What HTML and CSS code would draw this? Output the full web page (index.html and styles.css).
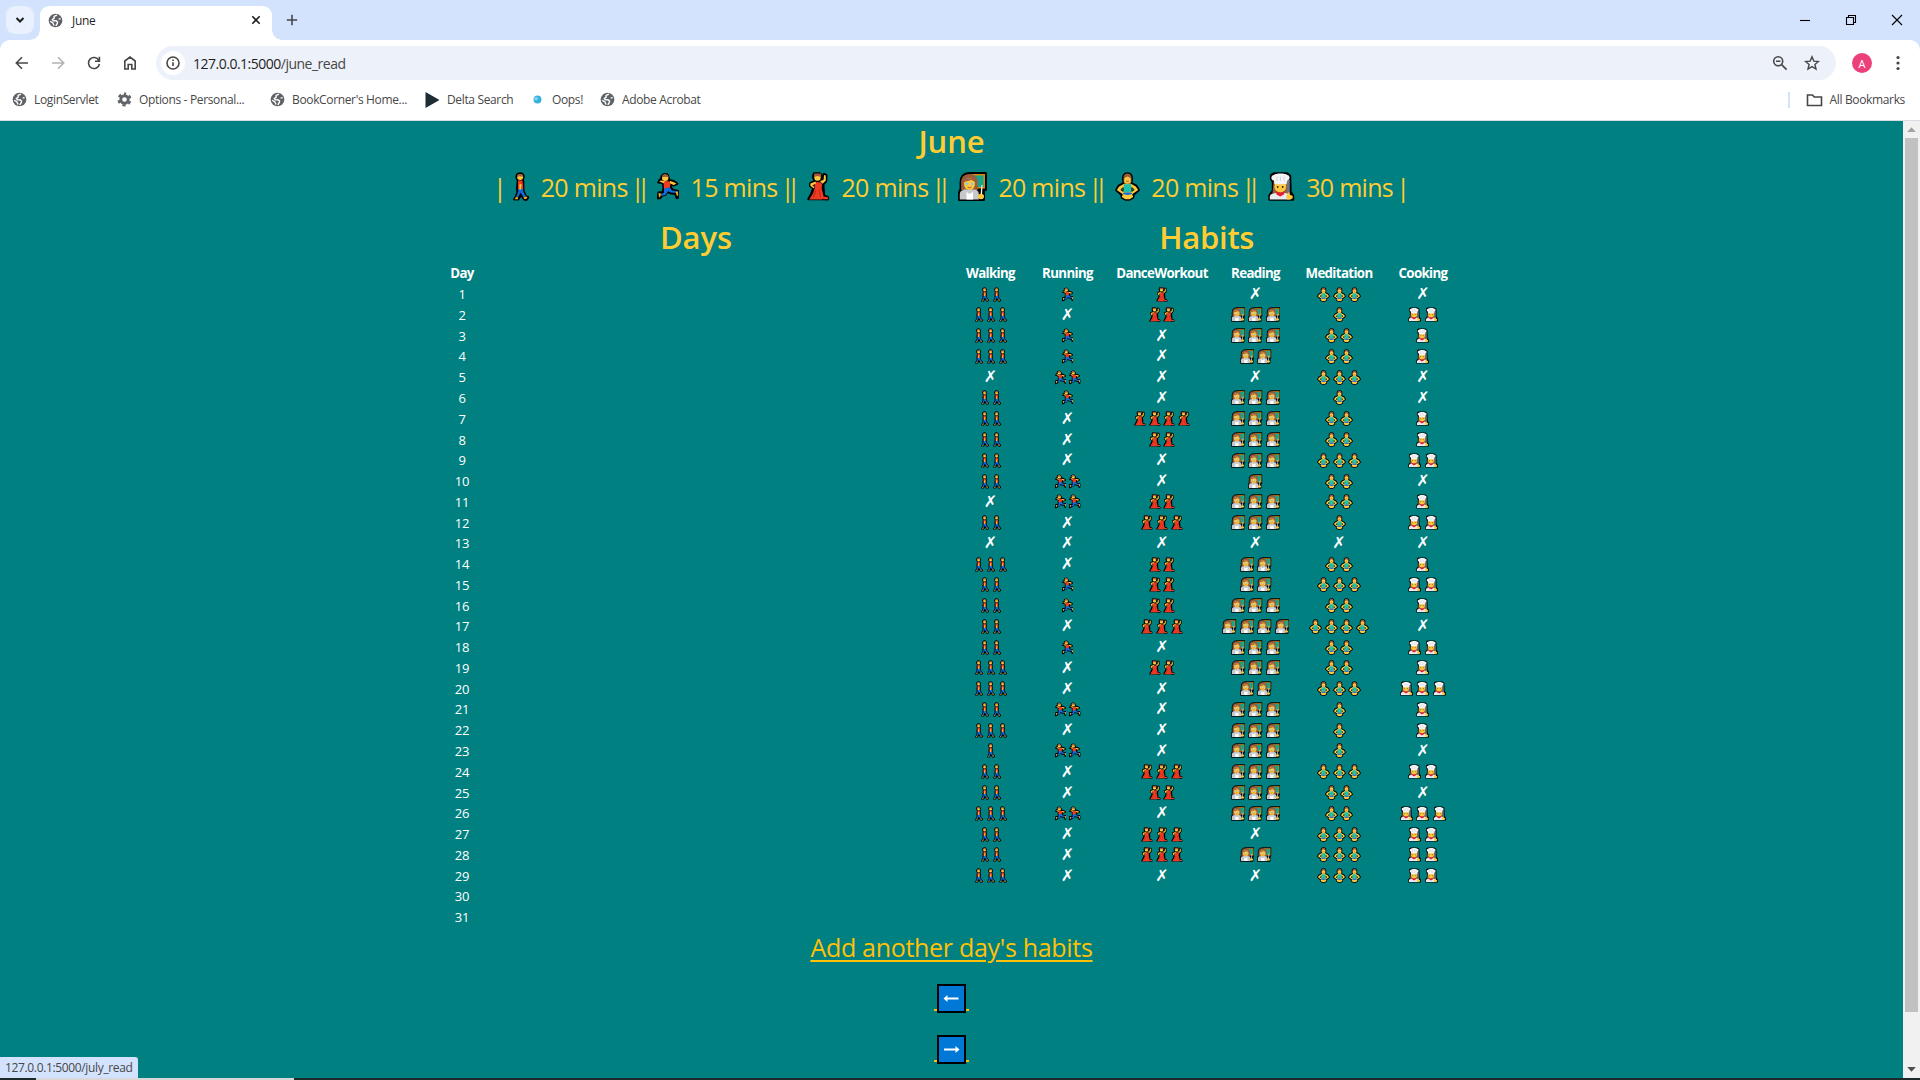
FILE: index.html
```html
<!DOCTYPE html>
<html lang="en">
<head>
<meta charset="utf-8">
<title>June</title>
<link rel="stylesheet" href="styles.css">
</head>
<body>
<svg class="sprite" aria-hidden="true">
  <symbol id="walk" viewBox="0 0 16 29">
    <path d="M7 1.500c-2.600 0-3.600 2-3.200 4.200L5 8.600 4.200 17l.6 3-2 5.500-1.300 1.800h3.600l3-5 3.200 5 2 .3 1.800-2.300-2.300-.6-2.600-5.700L10 9.500 9.500 8.200l1-3.500C10.200 2.500 9 1.500 7 1.500Z" fill="#111" stroke="#000" stroke-width="2.600" stroke-linejoin="round"/>
    <path d="M5 16h5l.2 3.500 2.600 5-2.100 1-3.200-5-2.500 5H3l2.300-6Z" fill="#0f6ddb"/>
    <path d="m3 25 2.200.5-.4 1.700H1.600ZM10.600 25.300l2-.9 2 .6-1.500 2-2 .1Z" fill="#f5a623"/>
    <path d="M5 8.500h4.500L10.300 17H5Z" fill="#ef3b22"/>
    <path d="M6.500 12h2l-.5 5.500H6.300Z" fill="#ffc83d"/>
    <circle cx="7.100" cy="5" r="3" fill="#ffc83d"/>
    <path d="M4 5.300C3.600 1 10.300.7 10.400 4.700L6 4.200Z" fill="#a4593b"/>
  </symbol>
  <symbol id="run" viewBox="0 0 22 28">
    <path d="M8.500 1.500c-3 0-4.500 2-4 4.800l-2 1.200-1 2.500 4.500.5.6 5-.8 4-4.300.500-.5 6 2.500-.5 1.500-2.500 3.500-.8 2-3 3 1.500 5 .8 1.200 4 1.600-.5V18.500l-5.300-1-2.500-3 .500-3 2.500 1.500 3.800-1.800-3.500-2.700-4.500-1-1-3c-.2-1.800-1.500-3-2.800-3Z" fill="#111" stroke="#000" stroke-width="2.200" stroke-linejoin="round"/>
    <path d="m7 15 5.500-.5 2.500 3.500 5 .8-.3 1.700-5.700-.5-3-1.300-2.500 3.800-4.300.7-.5-1.700 3.300-1Z" fill="#0f6ddb"/>
    <path d="m1.500 20.500 2 .2.500 2.200-2 2.300ZM18.700 19.500l2.300-.7.200 4.700-1.500-.5Z" fill="#f5a623"/>
    <path d="M6.500 8.500 14 9l-1.200 6L7 16Z" fill="#ef3b22"/>
    <path d="M2 8.800 4.500 8 8 9 6.500 10.800ZM13 8.500l4 1.200 2.500 1.500-3 1.200-3.500-1.700Z" fill="#ffc83d"/>
    <circle cx="8.200" cy="5.200" r="3.200" fill="#ffc83d"/>
    <path d="M5 4.700C4.700.8 11.500.8 11.500 5L9 4.200Z" fill="#a4593b"/>
  </symbol>
  <symbol id="dance" viewBox="0 0 23 29">
    <path d="M7 1.500 6 5 8 9 3.500 11l-.3 3 3.300 2-2 5.500-3 5.500h13.500l6 .2-.3-2-3.700-1.500-.8-11.200 3-3.500V3L17 2l-1.300 5-2.700.5 1.500-4L13 1.500Z" fill="#111" stroke="#000" stroke-width="2.400" stroke-linejoin="round"/>
    <path d="m7.500 10 6.500.5 1.200 2.500-.7 3 2.500 10-2 1.500H2.200L6 21.500l1.800-5.500Z" fill="#ef3b22"/>
    <path d="m9 18-3 8M12 17.500l1.500 8" stroke="#c5221b" fill="none"/>
    <path d="m16.500 24.500 4.500.7.200 2h-5Z" fill="#ef3b22"/>
    <path d="m3.500 11.500 5-2 .5 2-3.500 1.800 2 2-1 1-3.200-2.500ZM13 9l3.500-1 .6-5 1.700.6v5.200l-3.300 3Z" fill="#ffc83d"/>
    <circle cx="10.500" cy="5.600" r="3.200" fill="#ffc83d"/>
    <path d="m7 5 .2-3.500H14l.2 3.500-3.700-1Z" fill="#a4593b"/>
  </symbol>
  <symbol id="read" viewBox="0 0 29 29">
    <path d="M12 1h16v17h-2v10H1v-8l1.500-3V10C2.500 5 5 1 12 1Z" fill="#000" stroke="#000" stroke-width="1.800" stroke-linejoin="round"/>
    <path d="M13 2h14v14.500H15Z" fill="#d48a13"/>
    <path d="M15 3.500h10.500V15H15Z" fill="#16a58c"/>
    <path d="M11.500 2C5.500 2 3.200 6 3.200 10v8h16.500v-8c0-5-3.500-8-8.200-8Z" fill="#9a5b3c"/>
    <path d="M1.800 27.500V22c0-3 3-4.500 6-4.500h8c3 0 5 1.500 5 4.500v5.500Z" fill="#c6c8cc"/>
    <path d="m8.500 20 3 2 3.500-2v7.500H8.500Z" fill="#fff"/>
    <ellipse cx="11.500" cy="12" rx="5.500" ry="6" fill="#ffc83d"/>
    <path d="M5.500 10c2-5 10-5 12 0l-4-2Z" fill="#9a5b3c"/>
    <circle cx="9" cy="11.800" r="1.400" fill="#83c7e8"/><circle cx="14.200" cy="11.800" r="1.400" fill="#83c7e8"/>
    <path d="M9.500 15q2 1.500 4 0" stroke="#a4593b" fill="none"/>
    <path d="m23.500 13 1 0-.5 10h-1.500Z" fill="#fff"/>
    <ellipse cx="23" cy="24.500" rx="3" ry="2.700" fill="#ffc83d"/>
  </symbol>
  <symbol id="yoga" viewBox="0 0 25 29">
    <path d="M12.500 1.500C9.300 1.500 7.800 4 8.300 8l.5 3-5 2.800-2.500 4.200L6.500 22.500l.5 3 3.500 2h4l3.500-2 .5-3 5.200-4.500-2.500-4.200-5-2.800.5-3c.5-4-1-6.500-4.200-6.500Z" fill="#111" stroke="#000" stroke-width="2.400" stroke-linejoin="round"/>
    <path d="M9.500 11.500 4.200 14.600 1.800 18l6 4.300L6.800 25l3.500 2.200h4.400l3.500-2.200-1-2.700 6-4.300-2.400-3.400-5.300-3.100Z" fill="#ffc83d"/>
    <path d="m8.300 15.500-2.500 2.200 2.500 1.800ZM16.700 15.500l2.500 2.200-2.500 1.800Z" fill="#067c79" stroke="#000" stroke-width=".8"/>
    <path d="M8.800 12.200h7.400v8H8.800Z" fill="#19c2ad"/>
    <path d="M9 20.500h7l1.500 1.500-5 1-5-1Z" fill="#0f6ddb"/>
    <path d="M8.500 10V5.500c0-5.300 8-5.300 8 0V10l-1.500 1.500h-5Z" fill="#9a5b3c"/>
    <path d="M9.300 6.200 12.500 4.500l3.200 1.700v3.300c0 3-6.400 3-6.400 0Z" fill="#ffc83d"/>
    <path d="M11 9.300h3" stroke="#a4593b" stroke-width=".9"/>
  </symbol>
  <symbol id="cook" viewBox="0 0 27 29">
    <path d="M6 1.500h13l3 2.500.5 16 2.500 3.500v4H1.500V23.500L5 18.500V10L3 6.500 3.300 3Z" fill="#111" stroke="#000" stroke-width="2.400" stroke-linejoin="round"/>
    <path d="M5.500 10h14.500v11.500H4.500Z" fill="#9a5b3c"/>
    <path d="M19 8h2.800v13H19Z" fill="#6f7882"/>
    <path d="M1.800 27.500V24.500c0-2 3-3.500 6-3.500h9c3 0 5 1.500 5 3.500v3Z" fill="#e8eaee"/>
    <ellipse cx="12.300" cy="14.700" rx="5.900" ry="5.700" fill="#ffc83d"/>
    <path d="M6.500 12.200 5.800 8.500C2.500 8 2.500 3.500 6 3c1-2 12-2 13.200 0 3.300.5 3 5 0 5.500l-.7 3.700Z" fill="#f3f4f6"/>
    <path d="M9 4.500v4.500M12.500 4.500v4.500M16 4.500v4.500" stroke="#d3d6dc"/>
    <circle cx="9.700" cy="15" r=".9" fill="#222"/><circle cx="14.700" cy="15" r=".9" fill="#222"/>
    <path d="m8.500 19.500 3.700 1.300L16 19.500l.3 2.800-4.100 2.200-4-2.200Z" fill="#e81c2e"/>
    <path d="M20 20.500h1.500l.5 2.300 2.700 1.200v2.200l-2 1.300h-3.500l-1-3Z" fill="#ffc83d"/>
  </symbol>
  <symbol id="globe" viewBox="0 0 16 16">
    <circle cx="8" cy="8" r="7.300" fill="#5f6368"/>
    <path d="M9.500 2.200 6.500 3.700v2L4.600 6.800l1 1.600 3-.2 1.600 1.500-.4 1.700-1.500 2.300M2.300 9l2.800 1.300 1.400 3M13.500 6l-2.200.5" fill="none" stroke="#fff" stroke-width="1.500"/>
  </symbol>
</svg>

<header class="browser">
  <div class="tabstrip">
    <button class="tab-search"><svg width="10" height="8" viewBox="0 0 10 8"><path d="m1.500 2 3.500 3.500L8.500 2" class="line bold"/></svg></button>
    <div class="tab">
      <svg width="15" height="15"><use href="#globe"/></svg>
      <span class="tab-title">June</span>
      <svg width="10" height="10" viewBox="0 0 10 10"><path d="m1.300 1.300 7.400 7.400M8.700 1.300 1.300 8.700" class="line dark"/></svg>
    </div>
    <svg class="new-tab" width="12" height="12" viewBox="0 0 12 12"><path d="M6 .8v10.400M.8 6h10.400" class="line"/></svg>
    <div class="window-controls">
      <svg width="12" height="12" viewBox="0 0 12 12"><path d="M1 6.500h10" class="thin"/></svg>
      <svg width="12" height="12" viewBox="0 0 12 12"><path d="M1.500 3.500h7v7h-7ZM3.500 3.500v-2h7v7h-2" class="thin"/></svg>
      <svg width="12" height="12" viewBox="0 0 12 12"><path d="m1 1 10 10M11 1 1 11" class="thin"/></svg>
    </div>
  </div>
  <div class="toolbar">
    <div class="nav">
      <svg width="16" height="16" viewBox="0 0 16 16"><path d="M14 8H2.500M8 2.300 2.300 8 8 13.700" class="line"/></svg>
      <svg width="16" height="16" viewBox="0 0 16 16"><path d="M2 8h11.500M8 2.300 13.700 8 8 13.700" class="line off"/></svg>
      <svg width="16" height="16" viewBox="0 0 16 16"><path d="M12.800 5.300A5.500 5.500 0 1 0 13.400 9M13.400 1.800v4.400H9" class="line"/></svg>
      <svg width="16" height="16" viewBox="0 0 16 16"><path d="M2.800 14V6L8 2l5.200 4v8H9.800V9.500H6.200V14Z" class="line"/></svg>
    </div>
    <div class="omnibox">
      <span class="site-info"><svg width="16" height="16" viewBox="0 0 16 16"><circle cx="8" cy="8" r="6" class="line"/><path d="M8 7.300v3.700M8 4.600v1.500" class="line"/></svg></span>
      <span class="url">127.0.0.1:5000<span class="path">/june_read</span></span>
      <svg class="zoom" width="16" height="16" viewBox="0 0 16 16"><circle cx="6.200" cy="6.200" r="4.500" class="line"/><path d="m9.600 9.600 5 5M4 6.200h4.400" class="line"/></svg>
      <svg width="16" height="16" viewBox="0 0 16 16"><path d="m8 1.800 1.800 4.300 4.600.4-3.500 3 1.100 4.600L8 11.600l-4 2.500 1.100-4.600-3.500-3 4.600-.4Z" class="line star"/></svg>
    </div>
    <span class="avatar">A</span>
    <svg class="menu" width="4" height="16" viewBox="0 0 4 16"><circle cx="2" cy="2.500" r="1.600"/><circle cx="2" cy="8" r="1.600"/><circle cx="2" cy="13.500" r="1.600"/></svg>
  </div>
  <nav class="bookmarks">
    <a class="bm login"><svg width="15" height="15"><use href="#globe"/></svg><span>LoginServlet</span></a>
    <a class="bm options"><svg width="15" height="15" viewBox="0 0 16 16"><circle cx="8" cy="8" r="4" fill="none" stroke="#5f6368" stroke-width="3"/><circle cx="8" cy="8" r="6.300" fill="none" stroke="#5f6368" stroke-width="2.400" stroke-dasharray="3.300 3.300" stroke-dashoffset="1.600" transform="rotate(-90 8 8)"/></svg><span>Options - Personal...</span></a>
    <a class="bm corner"><svg width="15" height="15"><use href="#globe"/></svg><span>BookCorner's Home...</span></a>
    <a class="bm delta"><svg width="15" height="16" viewBox="0 0 15 16"><path d="M.5.8Q0 0 1 .3L14.500 8 1 15.700Q0 16 .5 15Z" fill="#202c33"/></svg><span>Delta Search</span></a>
    <a class="bm oops"><svg width="15" height="15" viewBox="0 0 16 16"><circle cx="8" cy="8" r="4.200" fill="#35b0df"/><circle cx="6.500" cy="7" r="2" fill="#7ed3ee"/></svg><span>Oops!</span></a>
    <a class="bm adobe"><svg width="15" height="15"><use href="#globe"/></svg><span>Adobe Acrobat</span></a>
    <span class="divider"></span>
    <a class="bm all"><svg width="17" height="14" viewBox="0 0 17 14"><path d="M1.500 12V2h5l1.700 2h7.300v8.500h-14Z" class="line"/></svg><span>All Bookmarks</span></a>
  </nav>
</header>

<div class="viewport">
  <main>
    <h1>June</h1>
    <p class="times" id="times"></p>
    <div class="tables">
      <section class="days">
        <h2>Days</h2>
        <div class="day-list" id="days"><b>Day</b></div>
      </section>
      <section class="habits">
        <h2>Habits</h2>
        <div class="habit-grid" id="habits">
          <b>Walking</b><b>Running</b><b>DanceWorkout</b><b>Reading</b><b>Meditation</b><b>Cooking</b>
        </div>
      </section>
    </div>
    <a class="add">Add another day's habits</a>
    <a class="arrow"><svg width="29" height="29" viewBox="0 0 29 29"><path d="M1 1h27v27H1Z"/><path class="shaft" d="M21.500 14.500H9"/><path class="tip" d="m6.500 14.500 4-3.500v7Z"/></svg></a>
    <a class="arrow"><svg width="29" height="29" viewBox="0 0 29 29"><path d="M1 1h27v27H1Z"/><path class="shaft" d="M7 14.500h12.500"/><path class="tip" d="m22.500 14.500-4-3.500v7Z"/></svg></a>
  </main>
  <div class="scrollbar">
    <svg width="9" height="5" viewBox="0 0 9 5"><path d="M4.500.3 8.800 5H.2Z" fill="#a3a3a3"/></svg>
    <span class="thumb"></span>
    <svg width="9" height="5" viewBox="0 0 9 5"><path d="M4.500 4.700.2 0h8.600Z" fill="#505050"/></svg>
  </div>
  <div class="status">127.0.0.1:5000/july_read</div>
</div>
<div class="taskbar"><span></span></div>
<script src="script.js"></script>
</body>
</html>
```
FILE: styles.css
```css
* { box-sizing: border-box; }
body {
  margin: 0;
  height: 1080px;
  display: flex;
  flex-direction: column;
  overflow: hidden;
  font-family: "Open Sans", "Noto Sans", sans-serif;
  background: #008080;
}
svg { flex: none; display: block; }
.sprite { position: absolute; width: 0; height: 0; }
.line { fill: none; stroke: #474747; stroke-width: 1.600; }
.line.bold { stroke: #1f1f1f; stroke-width: 2; }
.line.dark { stroke: #1f1f1f; }
.line.off { stroke: #b4b4b4; }
.line.star { stroke-width: 1.400; }
.thin { fill: none; stroke: #000; stroke-width: 1.100; }

/* Browser chrome */
.browser { height: 121px; flex: none; background: #d3e3fd; font-size: 12px; color: #474747; }
.tabstrip { height: 40px; display: flex; align-items: center; padding-left: 6px; }
.tab-search {
  width: 28px; height: 28px; padding: 0; border: 0; border-radius: 9px;
  background: #e9f0fe; display: grid; place-items: center;
}
.tab {
  position: relative;
  align-self: flex-end; width: 232px; height: 34px; margin-left: 6px; padding: 0 11px 6px 8px;
  background: #fff; border-radius: 9px 9px 0 0; display: flex; align-items: center;
}
.tab::before, .tab::after { content: ""; position: absolute; bottom: 0; width: 10px; height: 10px; }
.tab::before { left: -10px; background: radial-gradient(circle at 0 0, transparent 9.500px, #fff 10px); }
.tab::after { right: -10px; background: radial-gradient(circle at 100% 0, transparent 9.500px, #fff 10px); }
.tab-title { flex: 1; margin-left: 9px; color: #1f1f1f; letter-spacing: -.3px; }
.new-tab { margin-left: 14px; }
.window-controls { margin-left: auto; display: flex; gap: 34px; padding-right: 17px; }
.toolbar {
  height: 46px; background: #fff; border-radius: 10px 10px 0 0;
  display: flex; align-items: center;
}
.nav { display: flex; gap: 20px; padding-left: 14px; width: 156px; }
.omnibox {
  width: 1680px; height: 34px; padding: 0 16px 0 5px; border-radius: 17px; background: #edf1fa;
  display: flex; align-items: center;
}
.site-info { width: 24px; height: 24px; border-radius: 50%; background: #fff; display: grid; place-items: center; }
.url { margin-left: 8px; font-size: 14px; color: #1f1f1f; letter-spacing: -.5px; }
.path { color: #474747; }
.zoom { margin: 0 16px 0 auto; }
.avatar {
  width: 20px; height: 20px; margin-left: 16px; border-radius: 50%;
  background: #ec407a; color: #fff; font-size: 11px; display: grid; place-items: center;
}
.menu { margin-left: 24px; fill: #474747; }
.bookmarks {
  height: 35px; padding: 0 15px 7px 12px; background: #fff; border-bottom: 1px solid #d8dde3;
  display: flex; align-items: center;
}
.bm { display: flex; align-items: center; gap: 7px; white-space: nowrap; letter-spacing: -.35px; }
.login { width: 105px; }
.options { width: 153px; }
.corner { width: 155px; }
.delta { width: 105px; }
.oops { width: 70px; }
.divider { width: 2px; height: 16px; margin: 0 16px 0 auto; background: #d3e3fd; }

/* Page */
.viewport { position: relative; flex: 1; display: flex; min-height: 0; background: #008080; }
main { width: 1903px; display: flex; flex-direction: column; align-items: center; color: #fff; }
h1, h2 { margin: 0; color: #fc3; font-weight: 600; font-size: 31px; line-height: 40px; letter-spacing: -.1px; }
h1 { height: 44px; }
.times {
  margin: 0; height: 43px; display: flex; align-items: center;
  color: #fc3; font-size: 25px; line-height: 38px; letter-spacing: -.7px; white-space: pre;
}
.bar { width: 6px; text-indent: -3.900px; letter-spacing: -7.800px; }
.bar.double { width: 12px; }
.mins { width: 86px; margin: 0 8px 0 11.400px; }
.times svg { margin-left: 10.500px; }
.tables { width: 1018px; display: flex; margin-top: 9px; height: 711px; }
.days { width: 507px; }
.habits { width: 511px; padding-left: .5px; }
h2 { text-align: center; height: 46px; }
.habits h2 { padding-left: 3px; letter-spacing: -.3px; }
.day-list, .habit-grid { font-size: 13px; line-height: 20px; }
.day-list { width: 39px; text-align: center; letter-spacing: -.3px; }
.day-list > *, .cell, .habit-grid > b { display: flex; align-items: center; justify-content: center; height: 20.770px; }
.habit-grid { display: grid; grid-template-columns: 81px 73px 116px 71px 96px 72px; }
.day-list b, .habit-grid b { font-size: 13.300px; letter-spacing: -.65px; }
.cell { font-family: "DejaVu Sans", sans-serif; font-weight: bold; font-size: 16px; }
.add {
  color: #ffc107; font-size: 25px; line-height: 38px; letter-spacing: -.3px;
  text-decoration: underline; text-decoration-thickness: 2px; text-underline-offset: 3px;
}
.arrow { width: 35px; display: flex; justify-content: center; margin-top: 17px; height: 34px; padding-top: 1px; }
.arrow svg { fill: #0078d7; stroke: #000; stroke-width: 2; }
.arrow .shaft { stroke: #fff; }
.arrow .tip { fill: #fff; stroke: none; }
.arrow::before, .arrow::after { content: ""; width: 3px; height: 2px; margin-top: 25px; background: #ffc107; }

.scrollbar {
  width: 17px; background: #f1f1f1; display: flex; flex-direction: column; align-items: center; padding: 6px 0;
}
.thumb { width: 13px; height: 874px; margin: 6px 0 auto; background: #c1c1c1; }
.status {
  position: absolute; left: 0; bottom: 0; width: 138px; height: 21px; padding-left: 5px;
  background: #d3e3fd; border-radius: 0 3px 0 0; color: #474747; font-size: 12px; line-height: 21px; letter-spacing: -.35px;
}
.taskbar { height: 2px; flex: none; background: #1b2b2b; }
.taskbar span { display: block; width: 258px; height: 2px; margin-left: 36px; background: #d8d8d8; }
```
FILE: script.js
```js
// icon id, large width, small width, gap between small icons, minutes per icon
const habits = [
  ["walk", 16, 8, 4, 20],
  ["run", 22, 11.5, 3, 15],
  ["dance", 23, 12, 2.7, 20],
  ["read", 29, 14.5, 3, 20],
  ["yoga", 25, 13, 2.7, 20],
  ["cook", 27, 13.3, 3, 30],
];
const log = [
  "211030", "302312", "310321", "310221", "020030", "210310", "204321", "202321",
  "200332", "220120", "022321", "203312", "000000", "302221", "212232", "212321",
  "203440", "210322", "302321", "300233", "220311", "300311", "120310", "203332",
  "202320", "320323", "203032", "203232", "300032",
];
const icon = (id, w, h, gap) =>
  `<svg width="${w}" height="${h}" style="margin-right:${gap}px"><use href="#${id}"/></svg>`;

const single = '<span class="bar">|</span>';
const double = '<span class="bar double">||</span>';
document.getElementById("times").innerHTML = single + habits.map(([id, w, , , mins]) =>
  `<svg width="${w}" height="29"><use href="#${id}"/></svg><span class="mins">${mins} mins</span>`
).join(double) + single;

const days = document.getElementById("days");
for (let d = 1; d <= 31; d++) days.insertAdjacentHTML("beforeend", `<span>${d}</span>`);

document.getElementById("habits").insertAdjacentHTML("beforeend", log.map(row =>
  habits.map(([id, , w, gap], i) => {
    const n = +row[i];
    const content = n
      ? Array.from({ length: n }, (_, k) => icon(id, w, 15, k < n - 1 ? gap : 0)).join("")
      : "✗";
    return `<span class="cell">${content}</span>`;
  }).join("")
).join(""));
```
